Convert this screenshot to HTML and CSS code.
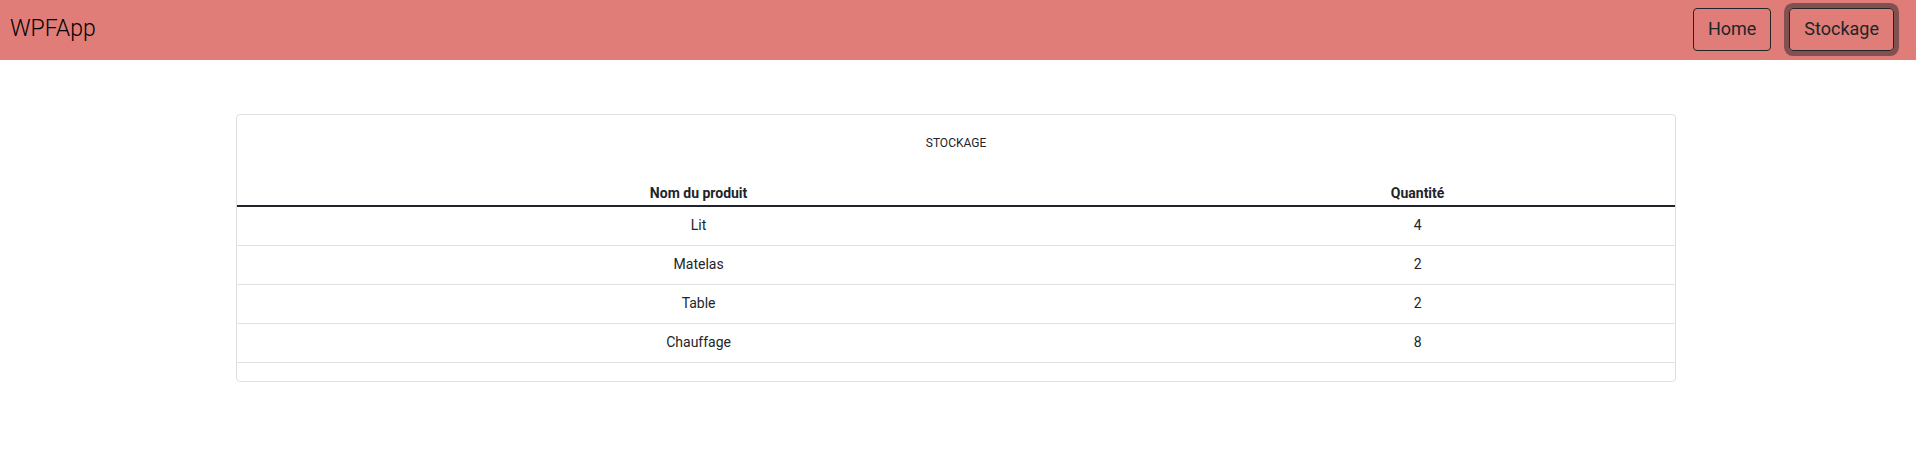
FILE: index.html
```html
<!DOCTYPE html>
<html lang="fr">
<head>
<meta charset="utf-8">
<meta name="viewport" content="width=device-width, initial-scale=1">
<title>WPFApp</title>
<link rel="stylesheet" href="styles.css">
</head>
<body>
<header class="toolbar">
  <span class="brand">WPFApp</span>
  <nav class="menu">
    <button type="button" class="btn">Home</button>
    <button type="button" class="btn btn-active">Stockage</button>
  </nav>
</header>
<main class="content">
  <section class="card">
    <h1 class="card-title">STOCKAGE</h1>
    <table class="stock">
      <colgroup><col class="col-name"><col></colgroup>
      <thead>
        <tr><th scope="col">Nom du produit</th><th scope="col">Quantité</th></tr>
      </thead>
      <tbody>
        <tr><td>Lit</td><td>4</td></tr>
        <tr><td>Matelas</td><td>2</td></tr>
        <tr><td>Table</td><td>2</td></tr>
        <tr><td>Chauffage</td><td>8</td></tr>
      </tbody>
    </table>
  </section>
</main>
</body>
</html>
```
FILE: styles.css
```css
* {
  box-sizing: border-box;
}

body {
  margin: 0;
  background: #fff;
  color: #212529;
  font-family: Roboto, "Liberation Sans", sans-serif;
  font-size: 14px;
  line-height: 22px;
}

.toolbar {
  display: flex;
  align-items: center;
  justify-content: space-between;
  padding: 8px 22px 9px 10px;
  background: #e07d78;
}

.brand {
  padding-bottom: 2px;
  color: #000;
  font-size: 23px;
  font-weight: 300;
  line-height: 32px;
}

.menu {
  display: flex;
  gap: 18px;
}

.btn {
  padding: 5px 14px 7px;
  border: 1px solid #212529;
  border-radius: 4px;
  background: transparent;
  color: #212529;
  font: inherit;
  font-size: 18px;
  line-height: 29px;
}

.btn-active {
  box-shadow: 0 0 0 5px rgba(33, 37, 41, 0.5);
}

.content {
  padding: 54px 4px 0 0;
}

.card {
  max-width: 1440px;
  margin: 0 auto;
  padding-bottom: 18px;
  border: 1px solid #dfdfdf;
  border-radius: 4px;
}

.card-title {
  margin: 0;
  padding: 16px 0 20px;
  font-size: 12px;
  font-weight: 400;
  line-height: 24px;
  text-align: center;
}

.stock {
  width: 100%;
  border-collapse: separate;
  border-spacing: 0;
  text-align: center;
}

.col-name {
  width: 64.2%;
}

.stock th {
  padding: 7px 8px 1px;
  border-bottom: 2px solid #212529;
  font-weight: 700;
}

.stock td {
  padding: 7px 8px 9px;
  border-bottom: 1px solid #dee2e6;
}
```
